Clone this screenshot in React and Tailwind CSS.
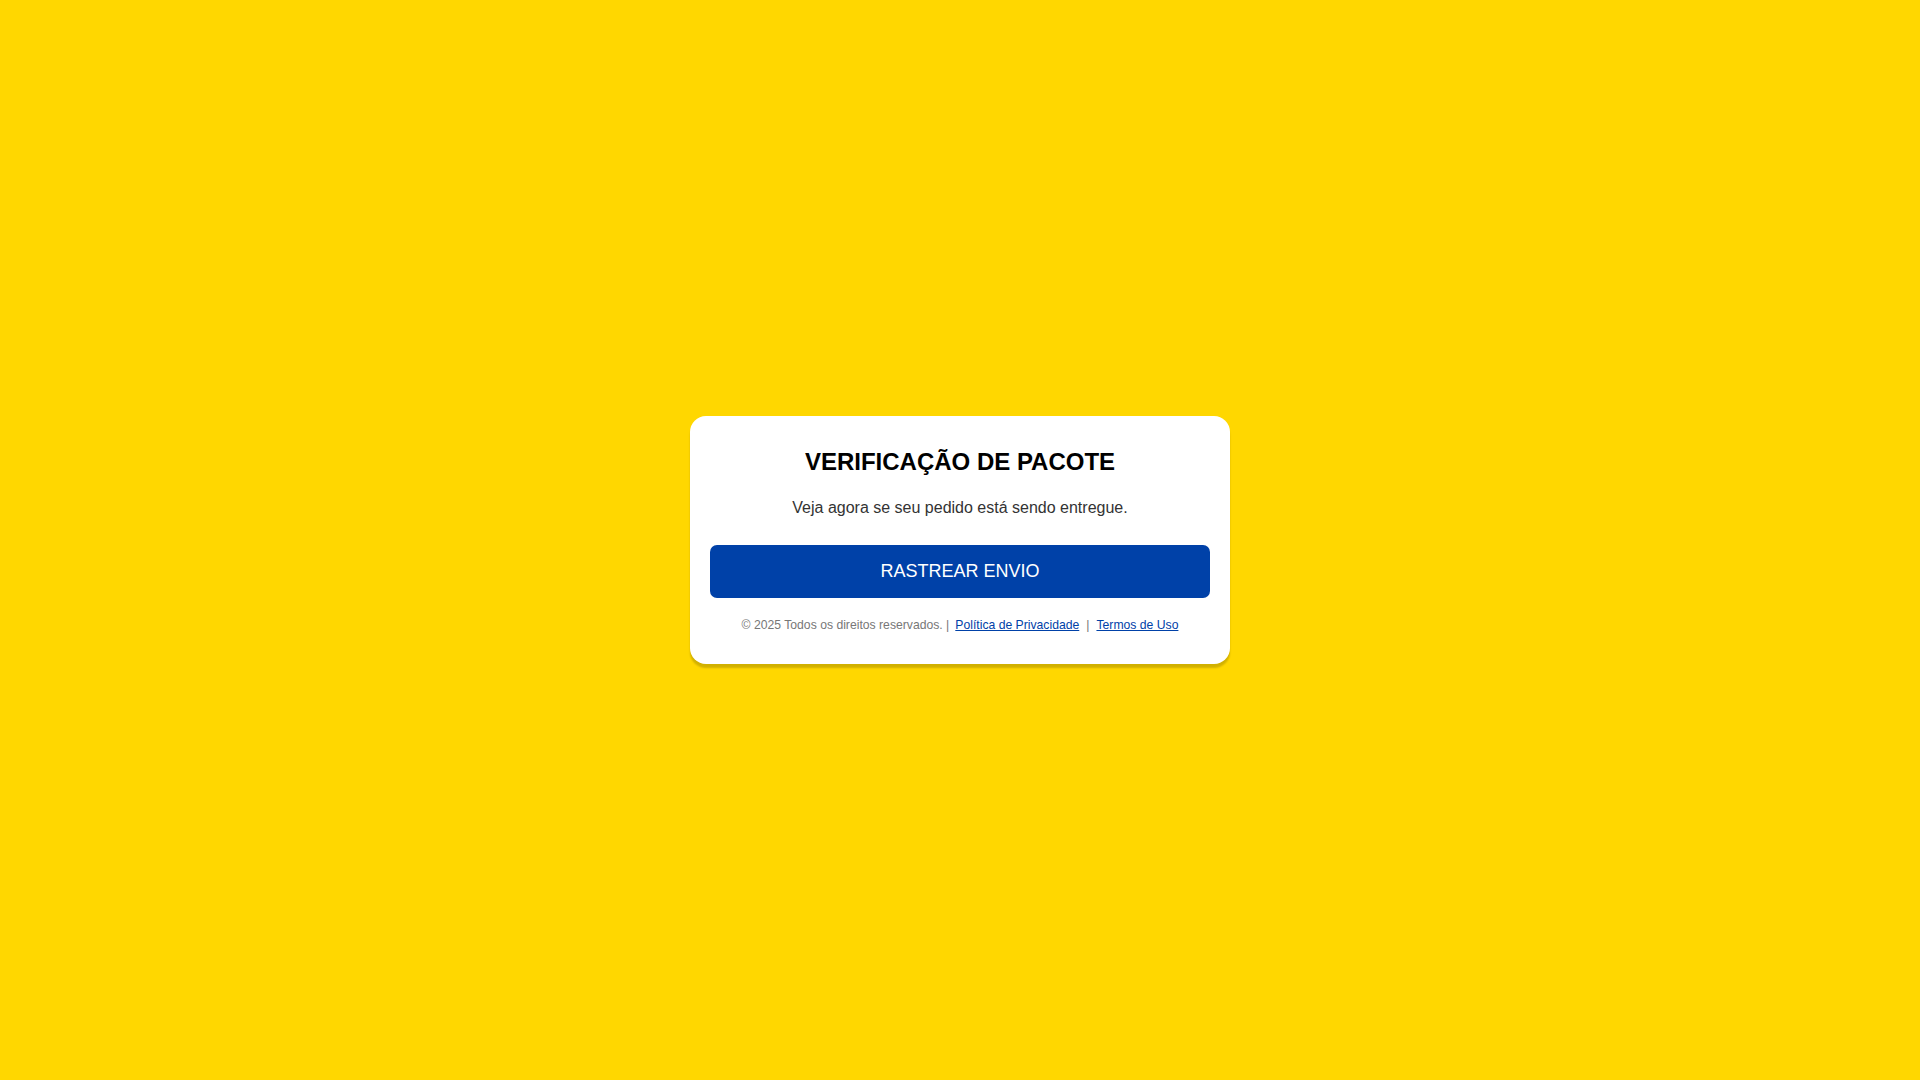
export default function App() {
  return (
    <div className="min-h-screen w-full bg-[#FFD700] flex items-center justify-center font-['Liberation_Sans',Arial,sans-serif]">
      <div className="w-[540px] bg-white rounded-[16px] px-5 pt-[31px] pb-[30px] text-center shadow-[0_4px_2px_rgba(0,0,0,0.18)]">
        <h1 className="text-[24px] leading-[30px] font-bold text-black mb-[19px]">
          VERIFICAÇÃO DE PACOTE
        </h1>
        <p className="text-[16px] leading-[24px] text-[#333333] mb-[25px]">
          Veja agora se seu pedido está sendo entregue.
        </p>
        <button className="w-full h-[53px] bg-[#0041A8] text-white text-[18px] rounded-[7px]">
          RASTREAR ENVIO
        </button>
        <div className="mt-[18px] text-[12.2px] leading-[18px] text-[#777777]">
          © 2025 Todos os direitos reservados. |
          <a href="#" className="text-[#0041A8] underline ml-[6px]">Política de Privacidade</a>
          <span className="mx-[7px]">|</span>
          <a href="#" className="text-[#0041A8] underline">Termos de Uso</a>
        </div>
      </div>
    </div>
  );
}
